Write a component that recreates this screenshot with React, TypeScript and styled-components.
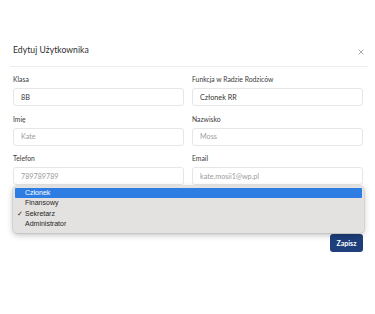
import React from 'react'
import styled, { createGlobalStyle } from 'styled-components'

const roles = ['Członek', 'Finansowy', 'Sekretarz', 'Administrator']

const App = () => {
    const selected = 'Sekretarz'
    const highlighted = 'Członek'

    return (
        <>
            <GlobalStyle />
            <Modal>
                <Header>
                    <Title>{'Edytuj Użytkownika'}</Title>
                    <Close aria-label="close">
                        <svg width="6" height="6" viewBox="0 0 6 6">
                            <path
                                d="M0.5 0.5 L5.5 5.5 M5.5 0.5 L0.5 5.5"
                                stroke="#a0a0a0"
                                strokeWidth="0.9"
                            />
                        </svg>
                    </Close>
                </Header>
                <Form>
                    <Field>
                        <Label>{'Klasa'}</Label>
                        <Input>{'8B'}</Input>
                    </Field>
                    <Field>
                        <Label>{'Funkcja w Radzie Rodziców'}</Label>
                        <Input>{'Członek RR'}</Input>
                    </Field>
                    <Field>
                        <Label>{'Imię'}</Label>
                        <Input $muted>{'Kate'}</Input>
                    </Field>
                    <Field>
                        <Label>{'Nazwisko'}</Label>
                        <Input $muted>{'Moss'}</Input>
                    </Field>
                    <Field>
                        <Label>{'Telefon'}</Label>
                        <Input $muted>{'789789789'}</Input>
                    </Field>
                    <Field>
                        <Label>{'Email'}</Label>
                        <Input $muted>{'kate.mosii1@wp.pl'}</Input>
                    </Field>
                    <Wide>
                        <Select />
                        <Menu>
                            {roles.map((role) => (
                                <Option
                                    key={role}
                                    $active={role === highlighted}
                                >
                                    {role === selected && <Check>✓</Check>}
                                    {role}
                                </Option>
                            ))}
                        </Menu>
                    </Wide>
                </Form>
                <Footer>
                    <Button>{'Zapisz'}</Button>
                </Footer>
            </Modal>
        </>
    )
}

export default App

const GlobalStyle = createGlobalStyle`
    html, body {
        margin: 0;
        padding: 0;
        background: #ffffff;
    }
    body {
        font-family: Lato, "Open Sans", sans-serif;
        color: #333333;
        width: 375px;
        height: 314px;
        overflow: hidden;
    }
`

const Modal = styled.div`
    width: 375px;
    height: 314px;
    background: #ffffff;
`

const Header = styled.div`
    display: flex;
    align-items: center;
    justify-content: space-between;
    margin: 0 7px 0 10px;
    padding: 44px 3px 10px 3px;
    border-bottom: 1px solid #ececec;
`

const Title = styled.div`
    font-size: 8.6px;
    line-height: 12px;
    color: #2e2e2e;
    letter-spacing: 0.05px;
`

const Close = styled.div`
    display: flex;
    align-items: center;
    padding-top: 3px;
    padding-right: 1px;
`

const Form = styled.div`
    display: grid;
    grid-template-columns: 1fr 1fr;
    column-gap: 8px;
    row-gap: 7.5px;
    padding: 7px 12px 0 13px;
`

const Field = styled.div`
    display: flex;
    flex-direction: column;
`

const Wide = styled.div`
    grid-column: 1 / 3;
    position: relative;
    padding-top: 12px;
`

const Label = styled.div`
    font-size: 6.8px;
    line-height: 10px;
    color: #3c3c3c;
    margin-bottom: 4px;
`

const Input = styled.div<{ $muted?: boolean }>`
    height: 18px;
    box-sizing: border-box;
    border: 1px solid #e6e6e6;
    border-radius: 3px;
    padding: 0 7px;
    display: flex;
    align-items: center;
    font-size: 7.2px;
    color: ${(props) => (props.$muted ? '#9c9c9c' : '#333333')};
`

const Select = styled.div`
    height: 18px;
    box-sizing: border-box;
    border: 1px solid #e6e6e6;
    border-radius: 3px;
`

const Menu = styled.div`
    position: absolute;
    left: 0;
    right: -1px;
    top: -7px;
    height: 47px;
    box-sizing: border-box;
    padding: 2px 2px;
    background: #e4e2e0;
    border-radius: 4px;
    box-shadow: 0 2px 6px rgba(0, 0, 0, 0.25), 0 0 0 0.5px rgba(0, 0, 0, 0.14);
`

const Option = styled.div<{ $active?: boolean }>`
    position: relative;
    height: 10.6px;
    line-height: 10.6px;
    padding-left: 10px;
    font-family: 'Liberation Sans', Arial, sans-serif;
    font-size: 7px;
    border-radius: 1px;
    color: ${(props) => (props.$active ? '#ffffff' : '#262626')};
    background: ${(props) => (props.$active ? '#2d7de3' : 'transparent')};
`

const Check = styled.span`
    position: absolute;
    left: 2px;
    top: 0;
    font-size: 7px;
`

const Footer = styled.div`
    display: flex;
    justify-content: flex-end;
    padding: 11px 12px 0 13px;
`

const Button = styled.div`
    width: 33px;
    height: 18px;
    border-radius: 3px;
    background: #1e3f7c;
    color: #ffffff;
    font-size: 7px;
    font-weight: 700;
    display: flex;
    align-items: center;
    justify-content: center;
`
